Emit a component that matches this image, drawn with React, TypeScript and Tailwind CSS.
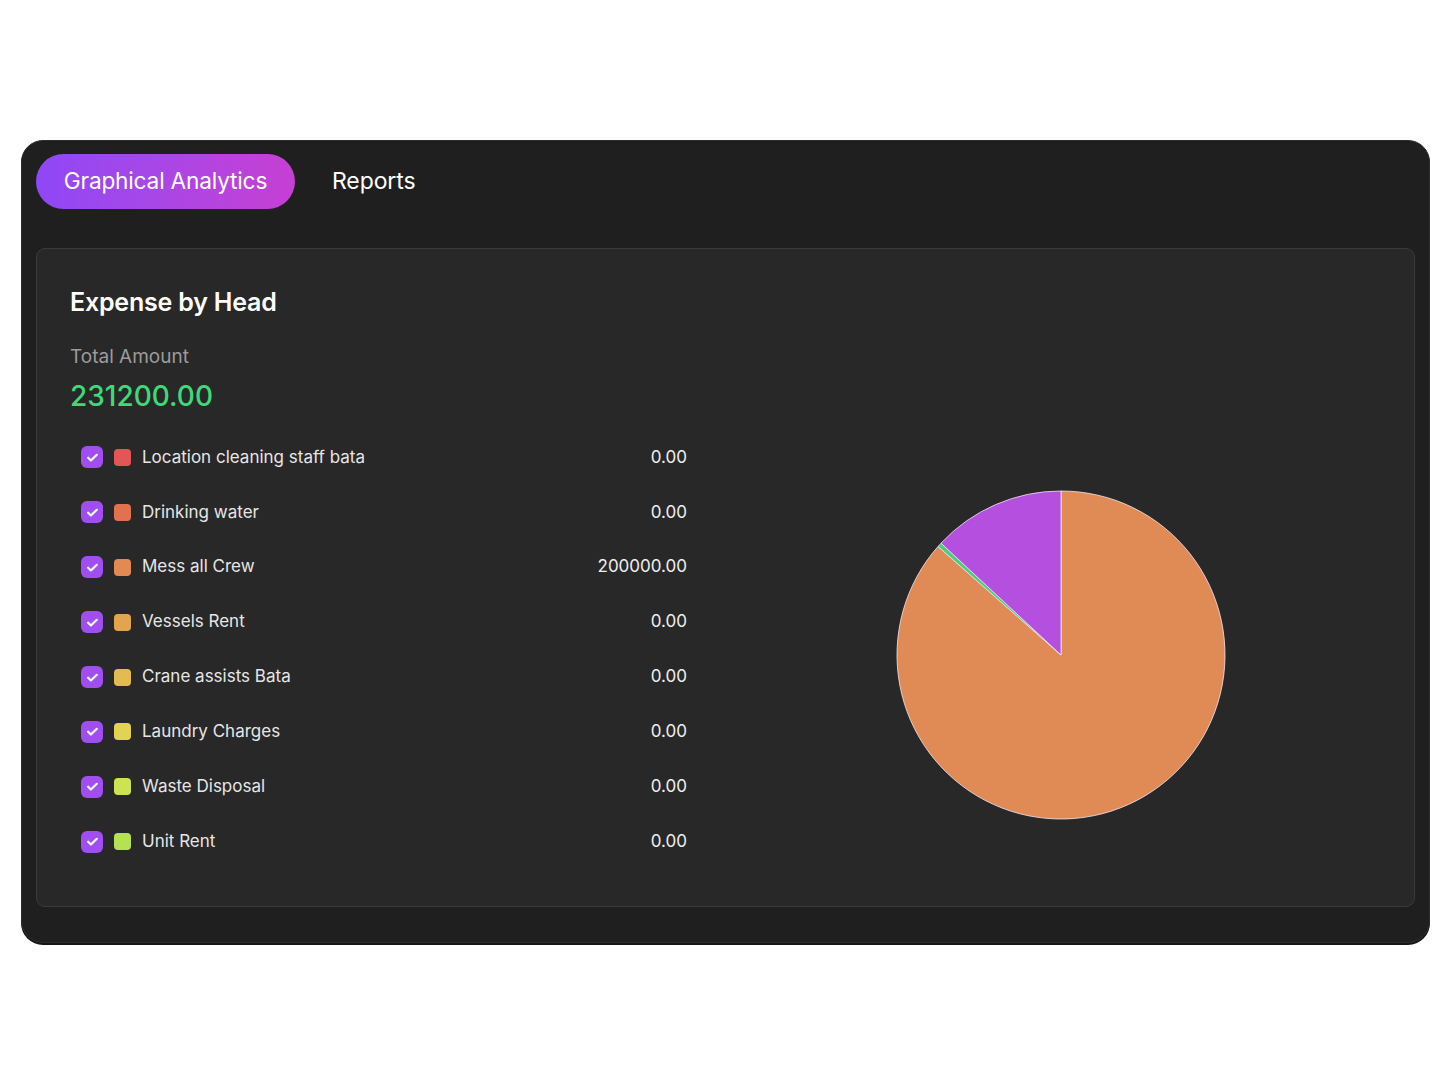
import { useState } from 'react'

interface ExpenseHead {
  name: string
  color: string
  amount: number
}

const heads: ExpenseHead[] = [
  { name: 'Location cleaning staff bata', color: '#e35656', amount: 0 },
  { name: 'Drinking water', color: '#e2714f', amount: 0 },
  { name: 'Mess all Crew', color: '#e28a52', amount: 200000 },
  { name: 'Vessels Rent', color: '#e3a44f', amount: 0 },
  { name: 'Crane assists Bata', color: '#e4bb52', amount: 0 },
  { name: 'Laundry Charges', color: '#e2d355', amount: 0 },
  { name: 'Waste Disposal', color: '#cde255', amount: 0 },
  { name: 'Unit Rent', color: '#b5e255', amount: 0 },
]

// slices past the visible legend (list continues below the fold)
const slices = [
  { color: '#e08a55', value: 200000 },
  { color: '#4ad07a', value: 1000 },
  { color: '#b44fe0', value: 30200 },
]

const total = 231200

function polar(cx: number, cy: number, r: number, deg: number) {
  const rad = ((deg - 90) * Math.PI) / 180
  return [cx + r * Math.cos(rad), cy + r * Math.sin(rad)]
}

function PieChart() {
  const cx = 166
  const cy = 166
  const r = 164
  let start = 0
  return (
    <svg width="332" height="332" viewBox="0 0 332 332">
      {slices.map((s, i) => {
        const sweep = (s.value / total) * 360
        const end = start + sweep
        const [x1, y1] = polar(cx, cy, r, start)
        const [x2, y2] = polar(cx, cy, r, end)
        const large = sweep > 180 ? 1 : 0
        const d = `M${cx},${cy} L${x1},${y1} A${r},${r} 0 ${large} 1 ${x2},${y2} Z`
        start = end
        return <path key={i} d={d} fill={s.color} stroke="#f3e6f5" strokeWidth="1" strokeOpacity="0.8" />
      })}
    </svg>
  )
}

function CheckBox() {
  return (
    <div className="w-[22px] h-[22px] rounded-[6px] bg-[#a04ef0] flex items-center justify-center shrink-0">
      <svg width="13" height="13" viewBox="0 0 24 24" fill="none" stroke="white" strokeWidth="4" strokeLinecap="round" strokeLinejoin="round">
        <path d="M4 12.5l5 5L20 7" />
      </svg>
    </div>
  )
}

export default function App() {
  const [tab, setTab] = useState('graph')

  return (
    <div className="w-[1450px] h-[1080px] bg-white pt-[140px] pl-[21px]" style={{ fontFamily: 'Inter, "Noto Sans", sans-serif' }}>
      <div className="w-[1409px] h-[803px] rounded-[22px] bg-[#1f1f1f] border border-[#2d2d2d] shadow-[0_2px_0_#151515] px-[14px] pt-[13px]">
        {/* Tabs */}
        <div className="flex items-center gap-[37px]">
          <button
            onClick={() => setTab('graph')}
            className={`h-[55px] w-[259px] rounded-full text-[22.7px] text-white tracking-[-0.2px] ${tab === 'graph' ? 'bg-gradient-to-r from-[#8f47f7] to-[#c63fd3]' : ''}`}
          >
            Graphical Analytics
          </button>
          <button onClick={() => setTab('reports')} className="text-[23px] text-white tracking-[-0.1px]">
            Reports
          </button>
        </div>

        {/* Chart card */}
        <div className="mt-[39px] h-[659px] rounded-[9px] bg-[#282828] border border-[#3a3a3a] px-[33px] pt-[37px]">
          <h2 className="text-[25px] leading-[32px] font-semibold text-white tracking-[-0.2px]">Expense by Head</h2>
          <div className="mt-[27px] text-[19px] leading-[24px] text-[#9c9c9c]">Total Amount</div>
          <div className="mt-[9px] text-[28px] leading-[36px] font-medium text-[#3fd97a]">231200.00</div>

          <div className="grid grid-cols-2 mt-[16px]">
            <div className="pl-[11px] w-[617px]">
              {heads.map((h) => (
                <div key={h.name} className="h-[54.9px] flex items-center">
                  <CheckBox />
                  <div className="w-[17px] h-[17px] rounded-[4px] ml-[11px] shrink-0" style={{ backgroundColor: h.color }} />
                  <span className="ml-[11px] text-[17px] text-[#e6e6e6] flex-1">{h.name}</span>
                  <span className="text-[17px] text-[#efefef]">{h.amount.toFixed(2)}</span>
                </div>
              ))}
            </div>
            <div className="flex items-center justify-center pl-[16px] pt-[10px]">
              <PieChart />
            </div>
          </div>
        </div>
      </div>
    </div>
  )
}
